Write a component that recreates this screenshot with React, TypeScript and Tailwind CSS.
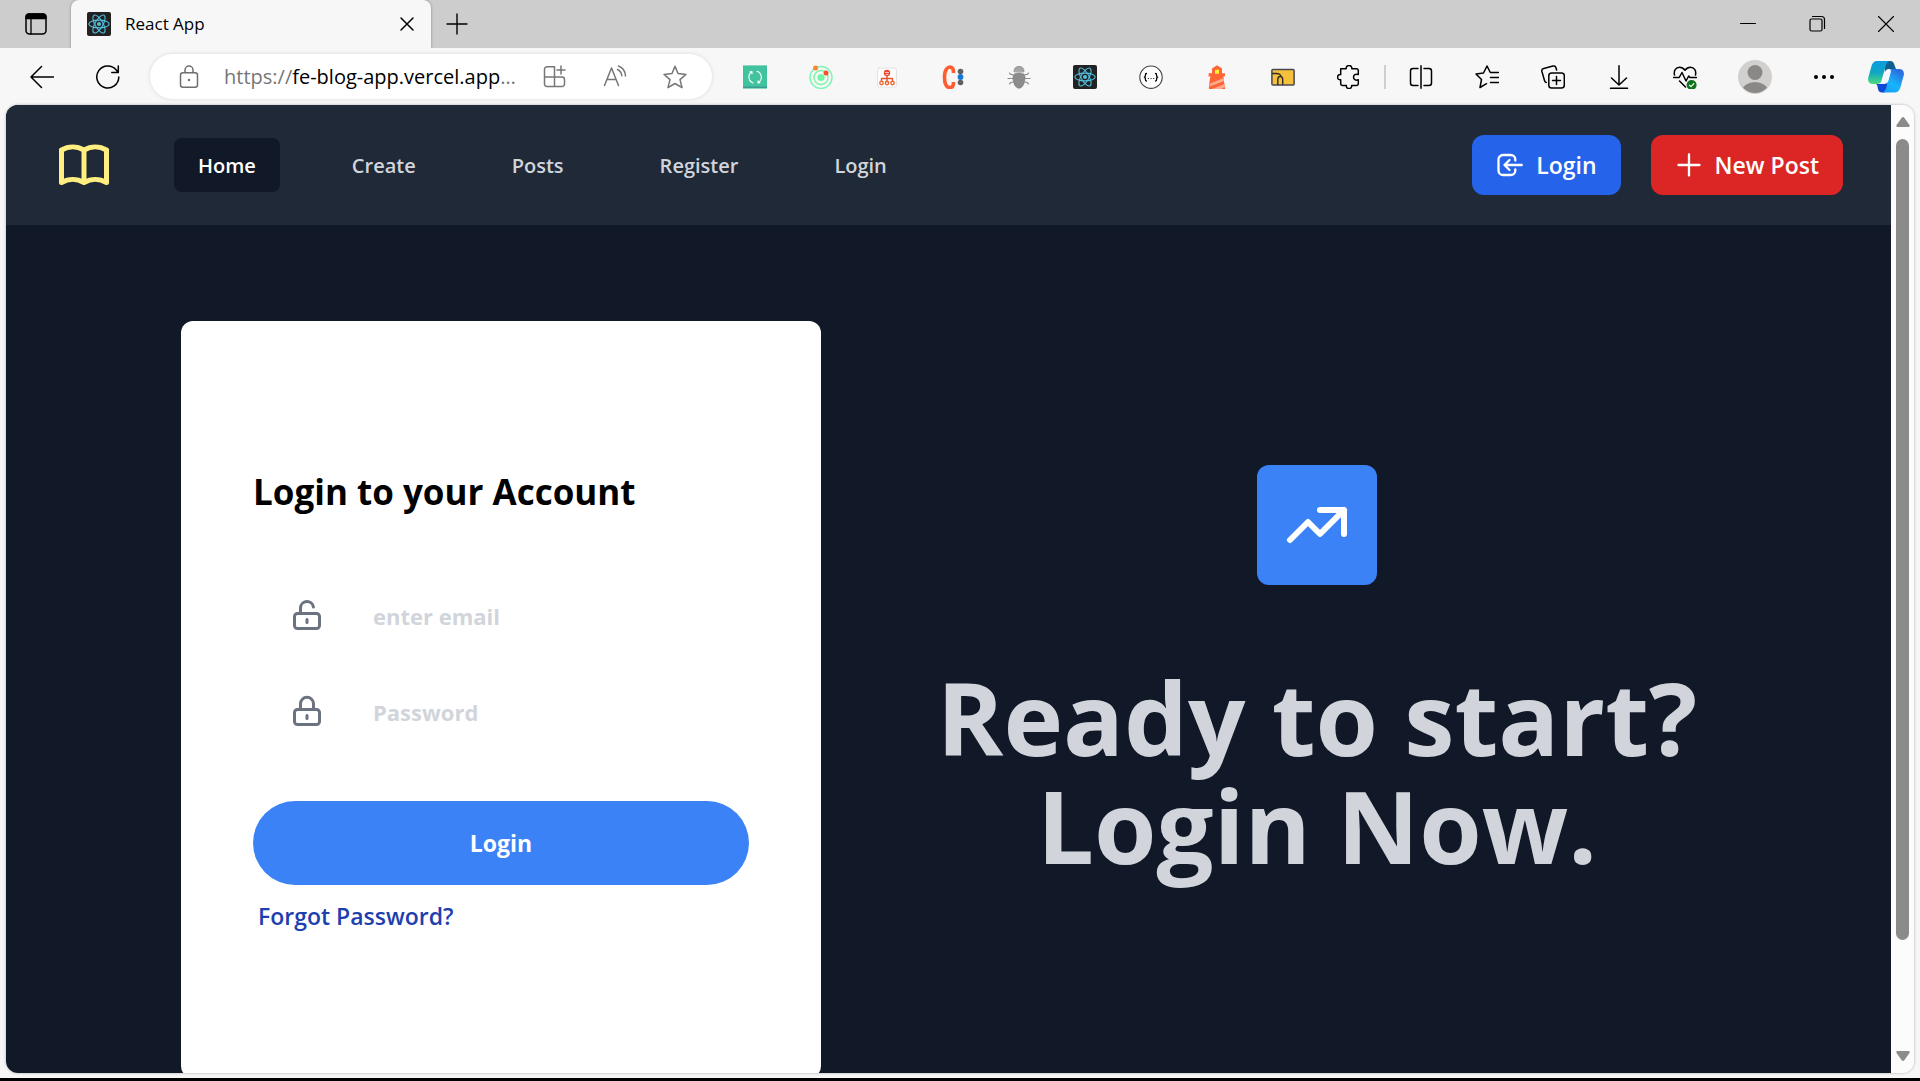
import type { ReactNode } from "react";

type IconProps = { children: ReactNode; className?: string; size?: number; stroke?: number };

function Icon({ children, className = "", size = 24, stroke = 1.5 }: IconProps) {
  return (
    <svg
      width={size}
      height={size}
      viewBox="0 0 24 24"
      fill="none"
      stroke="currentColor"
      strokeWidth={stroke}
      strokeLinecap="round"
      strokeLinejoin="round"
      className={`shrink-0 ${className}`}
      aria-hidden="true"
    >
      {children}
    </svg>
  );
}

function ReactLogo() {
  return (
    <Icon stroke={1}>
      <rect width="24" height="24" rx="2" fill="#222222" stroke="none" />
      <g stroke="#53c1de" strokeWidth="1.1">
        <ellipse cx="12" cy="12" rx="10.2" ry="3.9" />
        <ellipse cx="12" cy="12" rx="10.2" ry="3.9" transform="rotate(60 12 12)" />
        <ellipse cx="12" cy="12" rx="10.2" ry="3.9" transform="rotate(120 12 12)" />
      </g>
      <circle cx="12" cy="12" r="2" fill="#53c1de" stroke="none" />
    </Icon>
  );
}

function TabBar() {
  return (
    <div className="flex h-12 shrink-0 items-stretch bg-[#cdcdcd] text-black">
      <button aria-label="Tab actions" className="flex w-[71px] items-center justify-center">
        <Icon>
          <rect x="2" y="2" width="20" height="20" rx="3.5" />
          <path d="M2 6.5V5a3 3 0 0 1 3-3h14a3 3 0 0 1 3 3v1.5z" fill="currentColor" />
          <path d="M7 7v15" strokeWidth="1.3" />
        </Icon>
      </button>
      <div className="flex w-[360px] items-center rounded-t-lg bg-[#f7f7f7] pr-3 pl-4 shadow-[0_0_3px_rgba(0,0,0,0.35)]">
        <ReactLogo />
        <span className="ml-[14px] flex-1 text-[17px] leading-6">React App</span>
        <button aria-label="Close tab" className="flex size-6 items-center justify-center">
          <Icon>
            <path d="M6 6l12 12M18 6L6 18" />
          </Icon>
        </button>
      </div>
      <button aria-label="New tab" className="flex w-[52px] items-center justify-center">
        <Icon stroke={1.4}>
          <path d="M12 2v20M2 12h20" />
        </Icon>
      </button>
      <div className="flex-1" />
      <button aria-label="Minimize" className="flex w-[69px] items-center justify-center">
        <Icon stroke={1}>
          <path d="M4.5 11.5h15" />
        </Icon>
      </button>
      <button aria-label="Restore" className="flex w-[69px] items-center justify-center">
        <Icon stroke={1.2}>
          <rect x="5" y="7" width="12" height="12" rx="1.5" />
          <path d="M7.5 4.5h9a3 3 0 0 1 3 3v9" />
        </Icon>
      </button>
      <button aria-label="Close window" className="flex w-[69px] items-center justify-center">
        <Icon stroke={1.1}>
          <path d="M4.5 4.5l15 15M19.5 4.5l-15 15" />
        </Icon>
      </button>
    </div>
  );
}

function ToolButton({ label, children }: { label: string; children: ReactNode }) {
  return (
    <button aria-label={label} className="flex h-12 w-[66px] shrink-0 items-center justify-center">
      {children}
    </button>
  );
}

function AddressBar() {
  return (
    <div className="ml-[9px] flex h-[45px] flex-1 items-center rounded-full bg-white pr-[7px] shadow-[0_0_4px_rgba(0,0,0,0.12)]">
      <button aria-label="Site information" className="flex w-[74px] items-center justify-center pl-1 text-[#6f6f6f]">
        <Icon>
          <rect x="3.5" y="7.7" width="17" height="14.5" rx="2.5" />
          <path d="M8 7.5V5a4 4 0 0 1 8 0v2.5" />
          <circle cx="12" cy="15" r="1.2" fill="currentColor" stroke="none" />
        </Icon>
      </button>
      <span className="flex-1 text-[20px] leading-7 whitespace-nowrap text-black">
        <span className="text-[#767676]">https://</span>fe-blog-app.vercel.app<span className="text-[#767676]">…</span>
      </span>
      <button aria-label="App available" className="flex w-15 justify-center text-[#767676]">
        <Icon>
          <path d="M11.5 1.800H4A2.500 2.500 0 0 0 1.500 4.300V19A2.500 2.500 0 0 0 4 21.500h15a2.500 2.500 0 0 0 2.500-2.500v-4.500a2.500 2.500 0 0 0-2.500-2.500h-17.500M11.500 1.800V21.500M18 1v8M14 5h8" />
        </Icon>
      </button>
      <button aria-label="Read aloud" className="flex w-15 justify-center text-[#767676]">
        <Icon>
          <path d="M1.500 20.500L8.500 3l7 17.500M4 14.500h9M14.500 4.500c2.500 1.200 4 3.300 4.300 6.300M15.500 1c4.300 1.600 6.800 5 7 10" />
        </Icon>
      </button>
      <button aria-label="Add to favorites" className="flex w-15 justify-center text-[#767676]">
        <Icon>
          <path d="M12 1.200l3 7.300 8 .9-6 5.200 2 8-7-4.100-7 4.100 2-8-6-5.200 8-.9z" />
        </Icon>
      </button>
    </div>
  );
}

function CopilotLogo() {
  return (
    <svg width="36" height="33" viewBox="0 0 36 33" className="ml-[6px] shrink-0" aria-hidden="true">
      <defs>
        <linearGradient id="cpA" x1="0" y1="1" x2="0" y2="0">
          <stop offset="0" stopColor="#4bdc7c" />
          <stop offset="0.5" stopColor="#12a5c4" />
          <stop offset="1" stopColor="#0a9be0" />
        </linearGradient>
        <linearGradient id="cpB" x1="0" y1="1" x2="0.6" y2="0">
          <stop offset="0" stopColor="#1c9cf5" />
          <stop offset="0.5" stopColor="#15b4fb" />
          <stop offset="1" stopColor="#2b6fe0" />
        </linearGradient>
      </defs>
      <path d="M17 1h5c3 0 4 2 4.600 4.500L28 9h-7c-2.500 0-3.500 1.300-4.200 3.500z" fill="#0c5f8f" />
      <path d="M9 1h12c-2 1-2.800 3-3.500 5.500l-4 14c-.8 2.600-2 3.500-4.500 3.500H5c-4 0-5.500-3-4.700-6.500L3.500 6C4.400 3 6 1 9 1z" fill="url(#cpA)" />
      <path d="M8 24h6c2 0 3.400-.6 4.200-3L19 18l1 10c-.6 2.500-2 4.500-4.500 4.500h-2c-2.500 0-3.200-2-3.700-4.200C9.500 26 9.300 24.800 8 24z" fill="#1049d6" />
      <path d="M21 9h10c4 0 5.500 3 4.700 6.500L32.500 27c-.9 3.500-2.700 5.500-6 5.500H14c2.500-.6 3.600-2.600 4.300-5l4-14C23 11 22.600 9.300 21 9z" fill="url(#cpB)" />
      <path d="M18.300 12.500c.6-2.200 1.700-3.300 3.700-3.400 1 .7.800 2.300.3 4.400l-2 7c-.7 2.500-2 3.500-5 3.500-1.200 0-1.300-1.500-.8-3.500z" fill="#f5f9ff" />
    </svg>
  );
}

function Toolbar() {
  return (
    <div className="flex h-[57px] shrink-0 items-center bg-[#f7f7f7] pr-1 pl-[9px] text-black">
      <ToolButton label="Back">
        <Icon>
          <path d="M23.500 12H1M11.500 1.500L1 12l10.500 10.500" />
        </Icon>
      </ToolButton>
      <ToolButton label="Refresh">
        <Icon>
          <path d="M22.800 12A11 11 0 1 1 20.500 5.200L22 7.300M22.300 1v6.500h-6.500" />
        </Icon>
      </ToolButton>
      <AddressBar />
      <div className="flex items-center pl-[10px]">
        <ToolButton label="Sync extension">
          <Icon>
            <path d="M0 0h24v24H0z" fill="#42c3a0" stroke="none" />
            <path d="M0 23.500h24M0 .5h24" stroke="#8bd5c2" strokeWidth="1" />
            <path d="M0 21.500h24v1.500H0z" fill="#3a9f91" stroke="none" />
            <path d="M8.500 7a6.300 6.300 0 0 0 1.500 11M15.500 17.500a6.300 6.300 0 0 0-1.500-11.200M7 6.800l2-.3v2.200M17 17.700l-2 .3v-2.200" stroke="#fff" strokeWidth="1.1" />
          </Icon>
        </ToolButton>
        <ToolButton label="Orbit extension">
          <Icon>
            <circle cx="12" cy="12.5" r="11" stroke="#7ff5b8" />
            <circle cx="12" cy="12.5" r="7" stroke="#7ef7a6" />
            <circle cx="12" cy="12.5" r="3.6" fill="#74f7a4" stroke="none" />
            <circle cx="6.5" cy="3" r="2.5" fill="#ff8534" stroke="none" />
            <circle cx="17" cy="8" r="2.5" fill="#f0532c" stroke="none" />
          </Icon>
        </ToolButton>
        <ToolButton label="Tree extension">
          <Icon>
            <rect x="2.5" y="3" width="19" height="19" rx="2" fill="#fdfdfd" stroke="#e2e2e2" strokeWidth="1" />
            <circle cx="12" cy="8" r="3.2" fill="#e84a32" stroke="none" />
            <path d="M10.500 7.500h3M11 9.500h2" stroke="#fff" strokeWidth=".7" />
            <path d="M12 11v6M6.500 16v-2.500h11V16" stroke="#e2562f" strokeWidth="1.4" />
            <circle cx="6.5" cy="18" r="1.7" stroke="#ee6a34" strokeWidth="1.4" />
            <circle cx="12" cy="18" r="1.7" stroke="#ee6a34" strokeWidth="1.4" />
            <circle cx="17.5" cy="18" r="1.7" stroke="#ee6a34" strokeWidth="1.4" />
          </Icon>
        </ToolButton>
        <ToolButton label="Clarity extension">
          <Icon>
            <path d="M12.500 8V6.500c0-3-1.500-4.500-3.500-4.500S3.500 4 3.500 12s3 10.500 5.500 10.500 3.500-2 3.500-5V17" stroke="#ff5c30" strokeWidth="3.6" strokeLinecap="butt" />
            <circle cx="19.5" cy="6.5" r="2.8" fill="#606060" stroke="none" />
            <circle cx="19.5" cy="17.5" r="2.8" fill="#606060" stroke="none" />
            <circle cx="19.5" cy="12" r="2.9" fill="#1877d2" stroke="none" />
          </Icon>
        </ToolButton>
        <ToolButton label="Bug extension">
          <Icon>
            <path d="M6 9.500c-2 .3-3-.3-3.500-1.500M18 9.500c2 .3 3-.3 3.500-1.500M6 13.500H1M18 13.500h5M6 17c-2 0-3 .5-3.500 2M18 17c2 0 3 .5 3.500 2" stroke="#8d8d8d" strokeWidth="1.2" />
            <path d="M7 6.500c0-3.500 2-5 5-5s5 1.500 5 5z" fill="#a5a5a5" stroke="#7d7d7d" strokeWidth=".7" />
            <path d="M12 8.200c4 0 6 .8 6 4 0 6-2.500 11-6 11s-6-5-6-11c0-3.200 2-4 6-4z" fill="#8c8c8c" stroke="#727272" strokeWidth=".6" />
          </Icon>
        </ToolButton>
        <ToolButton label="React developer tools">
          <ReactLogo />
        </ToolButton>
        <ToolButton label="JSON extension">
          <Icon>
            <circle cx="12" cy="12.2" r="11.2" fill="#fff" stroke="#444" strokeWidth="1.1" />
            <path d="M7.500 8.500c-1.500 0-1 1.500-1.200 2.700-.1.500-.5.900-1 1 .5.100.9.500 1 1 .2 1.200-.3 2.800 1.200 2.800M16.500 8.500c1.500 0 1 1.500 1.200 2.700.1.500.5.900 1 1-.5.100-.9.500-1 1-.2 1.200.3 2.800-1.200 2.800" strokeWidth="1.3" />
            <path d="M9.300 13.500h.1M12 13.500h.1M14.700 13.500h.1" strokeWidth="1.1" />
          </Icon>
        </ToolButton>
        <ToolButton label="Lighthouse">
          <Icon>
            <path d="M12 .3l5 3.200v4.700h3v3.300h-1.800L20.300 24H3.700l2.100-12.500H4V8.200h3V3.500z" fill="#ff6534" stroke="none" />
            <path d="M3.700 8.200H5v3.300h13.200l.5 2L5 19l-1 2.500H3z" fill="#ff6534" stroke="none" />
            <path d="M5.300 18.500L18.600 13l.5 3L4.500 21.500zM7 24l12.700-5 .4 3-4.100 2z" fill="#ffab8f" stroke="none" />
            <path d="M2 11.500h3.300L3.500 24H2zM18.700 11.500H22V24h-1.500z" fill="#f7f7f7" stroke="none" />
            <path d="M10 4.700h4v4h-4z" fill="#fff133" stroke="none" />
          </Icon>
        </ToolButton>
        <ToolButton label="Folder extension">
          <Icon>
            <rect x=".9" y="4.5" width="22.2" height="15.5" rx="1" fill="#f5c13c" stroke="#484852" />
            <path d="M1.500 8.500h4c2 0 4 1 4.500 3M6.800 19.500v-5c0-2 .8-3 2.400-3s2.500 1 2.500 3v5" stroke="#302b26" strokeWidth="1.4" />
          </Icon>
        </ToolButton>
        <ToolButton label="Extensions">
          <Icon>
            <path d="M3.700 3.800h5.500c-.3-2 .9-3.200 2.800-3.200s3.100 1.200 2.800 3.200h4.700a1.800 1.800 0 0 1 1.800 1.800v4c-2.800-1-4.800.4-4.800 2.600s2 3.600 4.800 2.600v4a1.800 1.800 0 0 1-1.800 1.800h-4.900c.3 1.800-.8 2.900-2.600 2.900s-2.900-1.100-2.600-2.900H5.500a1.800 1.800 0 0 1-1.800-1.800v-4C1.700 15 .6 14 .6 12.200s1.100-2.800 3.100-2.600z" />
          </Icon>
        </ToolButton>
      </div>
      <div className="mx-[2px] h-6 w-[2px] bg-[#cfcfcf]" />
      <ToolButton label="Split screen">
        <Icon>
          <path d="M9 3.500H4A2.500 2.500 0 0 0 1.500 6v12A2.500 2.500 0 0 0 4 20.500h5M15 3.500h5A2.500 2.500 0 0 1 22.500 6v12a2.500 2.500 0 0 1-2.500 2.500h-5M12 .8v22.400" />
        </Icon>
      </ToolButton>
      <ToolButton label="Favorites">
        <Icon>
          <path d="M11.500 18.700L5 22.500l1.500-8L1 9l7.500-1L12 1l3.300 6.500M15.500 7.500h8M15.500 12.500h8M15.500 17.500h8" />
        </Icon>
      </ToolButton>
      <ToolButton label="Collections">
        <Icon>
          <rect x="7.8" y="8" width="15.5" height="15" rx="2.8" />
          <path d="M15.500 11.500v8M11.500 15.500h8M5.200 17.500a3 3 0 0 1-1.700-2L.9 6.500a2.500 2.500 0 0 1 1.800-3L12 1a2.500 2.500 0 0 1 3 1.800l.6 2.200" />
        </Icon>
      </ToolButton>
      <ToolButton label="Downloads">
        <Icon>
          <path d="M12 .8v19M4.500 13l7.500 7 7.500-7M3.500 23.300h17" />
        </Icon>
      </ToolButton>
      <ToolButton label="Browser essentials">
        <Icon>
          <path d="M1.500 10C.5 5.500 3 2.200 6.500 2.200c2.500 0 4 1 5.500 3 1.500-2 3-3 5.500-3 3.500 0 6 3.300 5 7.800M.5 12.500h5.700L9 7.500l4 8.500 2.700-5 1.300 1.500h6.500M6.500 16l6 6" />
          <circle cx="18.6" cy="20" r="5" fill="#11731a" stroke="none" />
          <path d="M16.500 20.300l1.500 1.300 2.800-3" stroke="#fff" strokeWidth="1.2" />
        </Icon>
      </ToolButton>
      <ToolButton label="Profile">
        <svg width="34" height="34" viewBox="0 0 34 34" className="ml-2 shrink-0" aria-hidden="true">
          <clipPath id="avatar">
            <circle cx="17" cy="17" r="16" />
          </clipPath>
          <circle cx="17" cy="17" r="17" fill="#d2d0ce" />
          <g clipPath="url(#avatar)" fill="#8a8886">
            <circle cx="17" cy="12.5" r="7.5" />
            <ellipse cx="17" cy="31" rx="13" ry="9" />
          </g>
        </svg>
      </ToolButton>
      <ToolButton label="Settings and more">
        <Icon className="ml-[14px]">
          <g fill="currentColor" stroke="none">
            <circle cx="4" cy="12" r="2" />
            <circle cx="12" cy="12" r="2" />
            <circle cx="20" cy="12" r="2" />
          </g>
        </Icon>
      </ToolButton>
      <ToolButton label="Copilot">
        <CopilotLogo />
      </ToolButton>
    </div>
  );
}

const links = ["Home", "Create", "Posts", "Register", "Login"];

function SiteNav() {
  return (
    <nav className="flex h-[120px] items-center bg-[#1f2937] px-12">
      <a href="#home" aria-label="Blog home" className="mr-15 text-[#ffee80]">
        <Icon size={60} stroke={2}>
          <path d="M3 19a9 9 0 0 1 9 0 9 9 0 0 1 9 0M3 6a9 9 0 0 1 9 0 9 9 0 0 1 9 0M3 6v13M12 6v13M21 6v13" />
        </Icon>
      </a>
      <div className="flex flex-1 gap-12 text-[20px] leading-7 font-semibold">
        {links.map((name) => (
          <a
            key={name}
            href={`#${name.toLowerCase()}`}
            className={
              name === "Home"
                ? "rounded-lg bg-[#111827] px-6 pt-[14px] pb-3 text-white"
                : "px-6 pt-[14px] pb-3 text-[#d1d5db]"
            }
          >
            {name}
          </a>
        ))}
      </div>
      <div className="flex gap-[30px] text-[23px] leading-9 font-semibold text-white">
        <button className="flex items-center gap-3 rounded-xl bg-[#2563eb] px-6 py-3">
          <svg
            width="28"
            height="24"
            viewBox="0 0 28 24"
            fill="none"
            stroke="currentColor"
            strokeWidth="2.3"
            strokeLinecap="round"
            strokeLinejoin="round"
            aria-hidden="true"
          >
            <path d="M19.300 7.500V6.500a4.500 4.500 0 0 0-4.500-4.500H7A4.500 4.500 0 0 0 2.500 6.500v11A4.500 4.500 0 0 0 7 22h7.800a4.500 4.500 0 0 0 4.500-4.500v-1M25.800 12H8.500M13.500 7l-5 5 5 5" />
          </svg>
          Login
        </button>
        <button className="flex items-center gap-3 rounded-xl bg-[#dc2626] px-6 py-3">
          <Icon size={28} stroke={2}>
            <path d="M12 3v18M3 12h18" />
          </Icon>
          New Post
        </button>
      </div>
    </nav>
  );
}

function Lock({ open = false }: { open?: boolean }) {
  return (
    <svg
      width="36"
      height="36"
      viewBox="0 0 36 36"
      fill="none"
      stroke="currentColor"
      strokeWidth="3"
      strokeLinecap="round"
      strokeLinejoin="round"
      className="shrink-0 text-[#6b7280]"
      aria-hidden="true"
    >
      <rect x="5.5" y="15.5" width="25" height="15" rx="3" />
      <path d={open ? "M11.500 15V9.800a6.500 6.500 0 0 1 12.900-.8" : "M11.500 15V9.800a6.500 6.500 0 0 1 13 0V15"} />
      <path d="M18 21.500v3" />
    </svg>
  );
}

function LoginCard() {
  return (
    <form className="w-[640px] shrink-0 rounded-xl bg-white px-18 py-36">
      <h1 className="text-[35px] leading-[54px] font-bold text-black">Login to your Account</h1>
      <div className="mt-[49px]">
        <label className="flex h-24 items-center gap-12 pl-9">
          <Lock open />
          <input
            type="email"
            aria-label="Email"
            placeholder="enter email"
            className="min-w-0 flex-1 text-[22px] font-bold text-[#111827] outline-none placeholder:text-[#d1d5db]"
          />
        </label>
        <label className="flex h-24 items-center gap-12 pl-9">
          <Lock />
          <input
            type="password"
            aria-label="Password"
            placeholder="Password"
            className="min-w-0 flex-1 text-[22px] font-bold text-[#111827] outline-none placeholder:text-[#d1d5db]"
          />
        </label>
      </div>
      <button
        type="button"
        className="mt-[41px] w-full rounded-full bg-[#3b82f6] py-6 text-[23px] leading-9 font-bold text-white"
      >
        Login
      </button>
      <a href="#forgot" className="mt-[13px] ml-[5px] inline-block text-[23px] leading-9 font-semibold text-[#1e40af]">
        Forgot Password?
      </a>
    </form>
  );
}

function Scrollbar() {
  return (
    <div className="flex w-[23px] shrink-0 flex-col items-center bg-[#fcfcfc] py-3">
      <svg width="14" height="10" viewBox="0 0 14 10" fill="#8b8b8b" aria-hidden="true">
        <path d="M5.500 1Q7-1 8.500 1L13.600 8.200Q14 10 12.500 10H1.500Q0 10 .4 8.200z" />
      </svg>
      <div className="my-3 flex w-[13px] flex-1 flex-col">
        <div className="h-[89%] rounded-full bg-[#8b8b8b]" />
      </div>
      <svg width="14" height="10" viewBox="0 0 14 10" fill="#8b8b8b" aria-hidden="true">
        <path d="M5.500 9Q7 11 8.500 9L13.600 1.800Q14 0 12.500 0H1.500Q0 0 .4 1.800z" />
      </svg>
    </div>
  );
}

export default function App() {
  return (
    <div className="flex h-screen flex-col overflow-hidden border-b-[3px] border-black bg-[#f7f7f7] font-['Open_Sans','Noto_Sans',sans-serif]">
      <TabBar />
      <Toolbar />
      <div className="mx-[6px] mb-[5px] flex min-h-0 flex-1 overflow-hidden rounded-xl shadow-[0_0_3px_rgba(0,0,0,0.3)]">
        <div className="min-w-0 flex-1 overflow-hidden bg-[#111827]">
          <SiteNav />
          <main className="flex items-start pt-24 pr-[78px] pl-[175px]">
            <LoginCard />
            <section className="flex flex-1 flex-col items-center pt-36">
              <div className="flex size-30 items-center justify-center rounded-xl bg-[#3b82f6] text-white">
                <Icon size={72} stroke={2}>
                  <path d="M13 7h8m0 0v8m0-8l-8 8-4-4-6 6" />
                </Icon>
              </div>
              <h2 className="mt-[78px] text-center text-[101px] leading-[108px] font-bold text-[#d1d5db]">
                Ready to start?
                <br />
                Login Now.
              </h2>
            </section>
          </main>
        </div>
        <Scrollbar />
      </div>
    </div>
  );
}
